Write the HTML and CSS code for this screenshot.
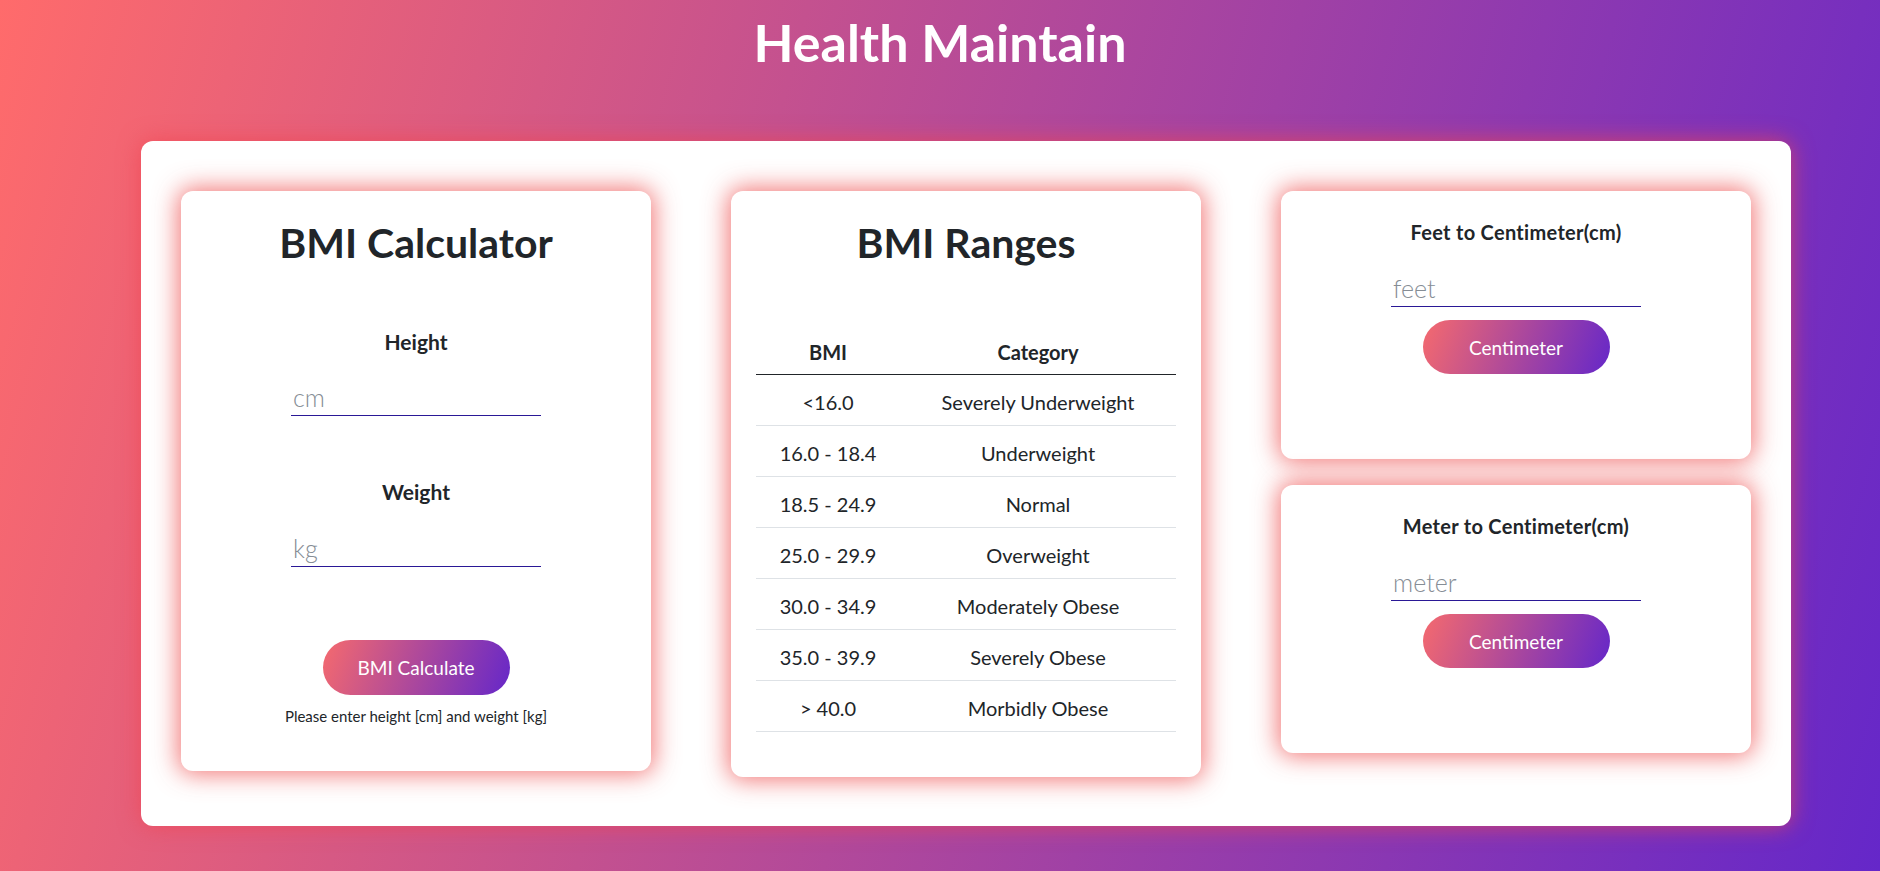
FILE: index.html
```html
<!DOCTYPE html>
<html lang="en">
<head>
<meta charset="utf-8">
<title>Health Maintain</title>
<link rel="stylesheet" href="styles.css">
</head>
<body>
<header class="site-header">
  <h1 class="site-title">Health Maintain</h1>
</header>
<main class="panel">
  <section class="card card-calc">
    <h2 class="card-title">BMI Calculator</h2>
    <label class="field-label label-first">Height</label>
    <input class="line-input input-first" type="text" placeholder="cm">
    <label class="field-label label-next">Weight</label>
    <input class="line-input input-next" type="text" placeholder="kg">
    <button class="grad-btn btn-calc" type="button">BMI Calculate</button>
    <p class="hint">Please enter height [cm] and weight [kg]</p>
  </section>

  <section class="card card-ranges">
    <h2 class="card-title">BMI Ranges</h2>
    <table class="ranges">
      <thead>
        <tr><th class="col-bmi">BMI</th><th>Category</th></tr>
      </thead>
      <tbody>
        <tr><td>&lt;16.0</td><td>Severely Underweight</td></tr>
        <tr><td>16.0 - 18.4</td><td>Underweight</td></tr>
        <tr><td>18.5 - 24.9</td><td>Normal</td></tr>
        <tr><td>25.0 - 29.9</td><td>Overweight</td></tr>
        <tr><td>30.0 - 34.9</td><td>Moderately Obese</td></tr>
        <tr><td>35.0 - 39.9</td><td>Severely Obese</td></tr>
        <tr><td>&gt; 40.0</td><td>Morbidly Obese</td></tr>
      </tbody>
    </table>
  </section>

  <div class="stack">
    <section class="card card-conv">
      <h3 class="conv-title">Feet to Centimeter(cm)</h3>
      <input class="line-input conv-input" type="text" placeholder="feet">
      <button class="grad-btn btn-conv" type="button">Centimeter</button>
    </section>
    <section class="card card-conv">
      <h3 class="conv-title">Meter to Centimeter(cm)</h3>
      <input class="line-input conv-input" type="text" placeholder="meter">
      <button class="grad-btn btn-conv" type="button">Centimeter</button>
    </section>
  </div>
</main>
</body>
</html>
```

FILE: styles.css
```css
* { box-sizing: border-box; }

html, body {
  margin: 0;
  min-height: 100%;
}

body {
  min-height: 871px;
  font-family: "Lato", "Open Sans", sans-serif;
  color: #212529;
  background: linear-gradient(105deg, #ff6b6b 0%, #6527c9 100%);
  padding-bottom: 45px;
}

.site-header {
  height: 141px;
  text-align: center;
}

.site-title {
  margin: 0;
  padding-top: 11px;
  font-size: 52px;
  line-height: 62px;
  font-weight: 700;
  color: #ffffff;
}

.panel {
  margin-left: 141px;
  width: 1650px;
  padding: 50px 40px 49px;
  background: #ffffff;
  border-radius: 12px;
  box-shadow: 0 0 22px rgba(240, 70, 80, 0.75);
  display: grid;
  grid-template-columns: 470px 470px 470px;
  column-gap: 80px;
  align-items: start;
}

.card {
  background: #ffffff;
  border-radius: 12px;
  box-shadow: 0 0 25px 3px rgba(240, 95, 95, 0.85);
  text-align: center;
}

.card-title {
  margin: 0;
  font-size: 41px;
  line-height: 49px;
  font-weight: 700;
}

.card-calc {
  height: 580px;
  padding: 27px 25px 0;
  display: flex;
  flex-direction: column;
  align-items: center;
}

.field-label {
  display: block;
  font-size: 21px;
  line-height: 26px;
  font-weight: 700;
}

.label-first { margin-top: 62px; }
.label-next { margin-top: 63px; }

.line-input {
  display: block;
  width: 250px;
  height: 38px;
  padding: 4px 2px 3px;
  border: none;
  border-bottom: 1px solid #2a1896;
  outline: none;
  background: transparent;
  font-family: "Lato", "Open Sans", sans-serif;
  font-size: 25px;
  line-height: 30px;
  font-weight: 300;
  color: #212529;
}

.input-first { margin-top: 23px; }
.input-next { margin-top: 24px; }

.line-input::placeholder {
  color: #868d95;
  font-weight: 300;
}

.grad-btn {
  display: block;
  width: 187px;
  height: 55px;
  border: none;
  border-radius: 28px;
  background: linear-gradient(110deg, #f56a6e 0%, #6527c9 100%);
  color: #ffffff;
  font-family: "Lato", "Open Sans", sans-serif;
  font-size: 19px;
  font-weight: 400;
  cursor: pointer;
}

.btn-calc { margin-top: 73px; }

.hint {
  margin: 11px 0 0;
  font-size: 15px;
  line-height: 20px;
}

.card-ranges {
  padding: 27px 25px 45px;
}

.ranges {
  width: 420px;
  margin-top: 57px;
  border-collapse: collapse;
  font-size: 20px;
}

.ranges th {
  padding: 6px 8px 0;
  line-height: 44px;
  font-weight: 700;
  border-bottom: 1px solid #212529;
}

.col-bmi { width: 144px; }

.ranges td {
  padding: 4px 8px 0;
  line-height: 46px;
  border-bottom: 1px solid #dee2e6;
}

.stack {
  display: flex;
  flex-direction: column;
  gap: 26px;
}

.card-conv {
  height: 268px;
  padding-top: 30px;
  display: flex;
  flex-direction: column;
  align-items: center;
}

.conv-title {
  margin: 0;
  font-size: 20px;
  line-height: 22px;
  letter-spacing: 0.3px;
  font-weight: 700;
}

.conv-input { margin-top: 26px; }

.btn-conv { margin-top: 13px; height: 54px; }
```
